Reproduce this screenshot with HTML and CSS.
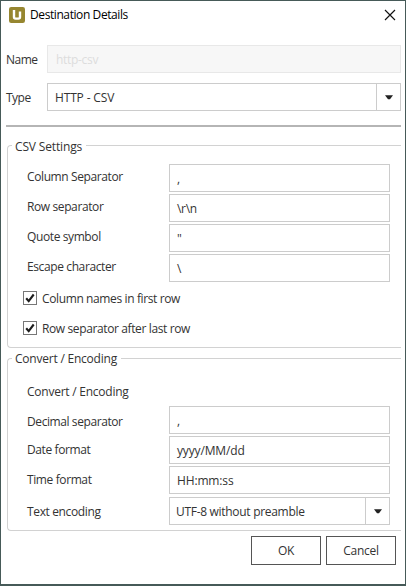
FILE: index.html
```html
<!DOCTYPE html>
<html lang="en">
<head>
<meta charset="utf-8">
<title>Destination Details</title>
<link rel="stylesheet" href="styles.css">
</head>
<body>
<main class="window">
  <header class="titlebar">
    <svg class="logo" width="16" height="16" viewBox="0 0 16 16"><rect width="16" height="16" rx="2.2" fill="#968630"/><path d="M5 3v7q0 1.6 1.6 1.6h2.8q1.6 0 1.6-1.6V4.5" fill="none" stroke="#fff" stroke-width="2.4"/></svg>
    <h1 class="title">Destination Details</h1>
    <svg class="close" width="12" height="12" viewBox="0 0 12 12"><path d="M1 1l10 10M11 1L1 11" stroke="#111" stroke-width="1.15"/></svg>
  </header>
  <div class="top-row"><span class="name">Name</span><div class="field disabled">http-csv</div></div>
  <div class="top-row"><span class="type">Type</span><div class="field combo"><span class="http">HTTP - CSV</span><span class="arrow"><svg width="8" height="5" viewBox="0 0 8 5"><path d="M0 .3h8L5 4.3H3z" fill="#222"/></svg></span></div></div>
  <div class="divider"></div>
  <section class="group csv">
    <h2 class="legend">CSV Settings</h2>
    <div class="row"><span>Column Separator</span><div class="field">,</div></div>
    <div class="row"><span>Row separator</span><div class="field">\r\n</div></div>
    <div class="row"><span>Quote symbol</span><div class="field">"</div></div>
    <div class="row"><span>Escape character</span><div class="field">\</div></div>
    <div class="check"><svg width="14" height="14" viewBox="0 0 14 14"><rect x=".5" y=".5" width="13" height="13" fill="#fff" stroke="#777"/><path d="M3.2 7.2l2.5 2.9L10.7 3.5" fill="none" stroke="#1c1c1c" stroke-width="2.1"/></svg><span>Column names in first row</span></div>
    <div class="check"><svg width="14" height="14" viewBox="0 0 14 14"><rect x=".5" y=".5" width="13" height="13" fill="#fff" stroke="#777"/><path d="M3.2 7.2l2.5 2.9L10.7 3.5" fill="none" stroke="#1c1c1c" stroke-width="2.1"/></svg><span>Row separator after last row</span></div>
  </section>
  <section class="group encoding">
    <h2 class="legend">Convert / Encoding</h2>
    <div class="row heading"><span>Convert / Encoding</span></div>
    <div class="row decimal"><span>Decimal separator</span><div class="field">,</div></div>
    <div class="row format"><span>Date format</span><div class="field">yyyy/MM/dd</div></div>
    <div class="row format"><span>Time format</span><div class="field">HH:mm:ss</div></div>
    <div class="row last"><span>Text encoding</span><div class="field combo"><span>UTF-8 without preamble</span><span class="arrow"><svg width="8" height="5" viewBox="0 0 8 5"><path d="M0 .3h8L5 4.3H3z" fill="#222"/></svg></span></div></div>
  </section>
  <footer class="actions"><button>OK</button><button>Cancel</button></footer>
</main>
</body>
</html>
```
FILE: styles.css
```css
* { box-sizing: border-box; }
body {
  margin: 0;
  font: 12px/16px "Open Sans", "Noto Sans", sans-serif;
  letter-spacing: -0.3px;
  color: #333;
}
h1, h2 { margin: 0; font: inherit; }
svg { display: block; flex: none; }
.window {
  width: 406px;
  height: 586px;
  padding: 0 4px 0 5px;
  border: 1px solid #465a58;
  border-bottom-width: 2px;
  background: #fff;
  overflow: hidden;
}
.titlebar { display: flex; align-items: center; height: 28px; padding: 0 5px 0 3px; }
.title { flex: 1; margin-left: 5px; color: #000; letter-spacing: -0.41px; }
.name { padding-top: 2px; letter-spacing: -0.5px; }
.type { padding-top: 2px; letter-spacing: -0.5px; }
.http { letter-spacing: -0.15px; margin-left: 1px; padding-top: 1px; }
.top-row {
  display: grid;
  grid-template-columns: 41px 354px;
  align-items: center;
  height: 28px;
  margin-top: 16px;
}
.top-row + .top-row { margin-top: 10px; }
.field {
  display: flex;
  align-items: center;
  height: 28px;
  border: 1px solid #ccc;
  padding: 2px 0 0 7px;
  white-space: nowrap;
}
.field.disabled { background: #f7f7f7; border-color: #e8e8e8; color: #ddd; padding: 1px 0 0 8px; }
.field.combo { padding-top: 0; padding-left: 6px; justify-content: space-between; }
.arrow {
  display: flex;
  align-items: center;
  justify-content: center;
  width: 24px;
  height: 26px;
  border-left: 1px solid #ccc;
}
.divider { height: 2px; margin-top: 14px; background: #b5b5b5; }
.group {
  margin: 18px 0 0 1px;
  border: 1px solid #d2d2d2;
  border-right: 0;
  border-radius: 4px 0 0 4px;
}
.csv { height: 203px; }
.encoding { height: 173px; margin-top: 10px; }
.legend {
  width: max-content;
  height: 16px;
  margin: -8px 0 10px 4px;
  padding: 0 4px 0 3px;
  background: #fff;
  letter-spacing: -0.22px;
}
.csv .legend { padding-top: 1px; letter-spacing: -0.15px; }
.row {
  display: grid;
  grid-template-columns: 142px 221px;
  height: 28px;
  margin: 0 0 2px 19px;
}
.row > span { padding-top: 5px; letter-spacing: -0.39px; }
.row.heading { height: 29px; margin-bottom: 0; padding-top: 2px; }
.row.heading > span { letter-spacing: -0.24px; }
.row.decimal > span { padding-top: 8px; letter-spacing: -0.41px; }
.row.format > span { padding-top: 6px; }
.row.format .field { letter-spacing: -0.15px; }
.row.last { margin-top: 3px; }
.row.last > span { padding-top: 7px; letter-spacing: -0.36px; }
.row.last .field span:first-child { padding-top: 1px; }
.check { display: flex; align-items: center; gap: 5px; height: 14px; margin: 9px 0 16px 15px; letter-spacing: -0.38px; }
.check span { padding-top: 2px; }
.check + .check { margin-top: 0; }
.actions { display: flex; justify-content: flex-end; gap: 5px; padding: 5px 5px 0 0; }
button {
  width: 70px;
  height: 29px;
  padding: 1px 0 0;
  border: 1px solid #555;
  background: #fff;
  font: inherit;
  letter-spacing: inherit;
  color: inherit;
}
```
